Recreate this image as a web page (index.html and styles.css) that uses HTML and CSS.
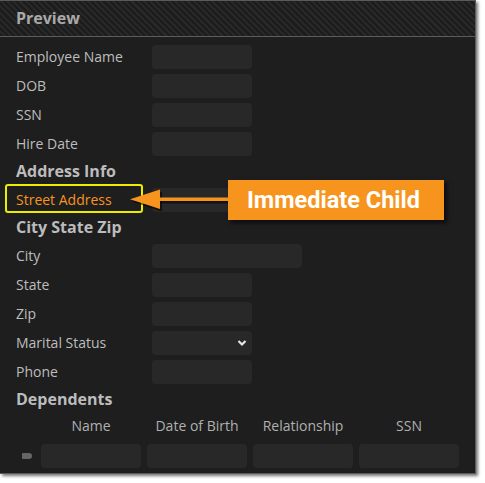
FILE: index.html
```html
<!DOCTYPE html>
<html>
<head>
<meta charset="utf-8">
<link rel="stylesheet" href="styles.css">
</head>
<body>
<div class="panel">
  <div class="header">Preview</div>
  <div class="content">
    <div class="row"><span class="label">Employee Name</span><span class="input"></span></div>
    <div class="row"><span class="label">DOB</span><span class="input"></span></div>
    <div class="row"><span class="label">SSN</span><span class="input"></span></div>
    <div class="row"><span class="label">Hire Date</span><span class="input"></span></div>
    <div class="heading">Address Info</div>
    <div class="row street"><span class="label hl">Street Address</span><span class="input"></span>
      <svg class="arrow" width="110" height="30" viewBox="0 0 110 30">
        <g transform="translate(2,2)" fill="rgba(0,0,0,0.55)">
          <rect x="26" y="11.5" width="80" height="4"/>
          <polygon points="0,13.5 30,3.5 30,23.5"/>
        </g>
        <g fill="#f7941d">
          <rect x="26" y="11.5" width="80" height="3.5"/>
          <polygon points="0,13.2 30,3.5 30,23"/>
        </g>
      </svg>
      <div class="callout">Immediate Child</div>
    </div>
    <div class="heading">City State Zip</div>
    <div class="row"><span class="label">City</span><span class="input wide"></span></div>
    <div class="row"><span class="label">State</span><span class="input"></span></div>
    <div class="row"><span class="label">Zip</span><span class="input"></span></div>
    <div class="row"><span class="label">Marital Status</span><span class="input select"><svg width="10" height="8" viewBox="0 0 10 8"><path d="M1.5 2 L5 5.5 L8.5 2" fill="none" stroke="#e6e6e6" stroke-width="2.2"/></svg></span></div>
    <div class="row"><span class="label">Phone</span><span class="input"></span></div>
    <div class="heading">Dependents</div>
    <div class="cols">
      <span></span><span>Name</span><span>Date of Birth</span><span>Relationship</span><span>SSN</span>
    </div>
    <div class="cols gridrow">
      <span class="indicator"></span><span class="input"></span><span class="input"></span><span class="input"></span><span class="input"></span>
    </div>
  </div>
</div>
</body>
</html>
```
FILE: styles.css
```css
html, body {
  margin: 0;
  padding: 0;
  background: #ffffff;
}
body {
  font-family: "Open Sans", "DejaVu Sans", sans-serif;
  width: 485px;
  height: 483px;
  overflow: hidden;
}
.panel {
  width: 476px;
  height: 474px;
  background: #1e1e1e;
  border: 1px solid #5a5a5a;
  border-left: none;
  box-sizing: border-box;
  box-shadow: 2px 2px 3px rgba(0,0,0,0.55);
  overflow: visible;
}
.header {
  height: 36px;
  box-sizing: border-box;
  border-bottom: 1px solid #5c5c5c;
  background: repeating-linear-gradient(45deg, #1c1c1c 0px, #1c1c1c 2.2px, #282828 2.2px, #282828 4.4px);
  color: #a9a9a9;
  font-weight: 700;
  font-size: 16px;
  padding-left: 16px;
  line-height: 35px;
}
.content {
  padding-top: 5px;
}
.row {
  display: grid;
  grid-template-columns: 136px auto;
  align-items: center;
  height: 29px;
  padding-left: 16px;
  position: relative;
}
.label {
  color: #bdbdbd;
  font-size: 14px;
}
.input {
  display: block;
  width: 100px;
  height: 24px;
  background: #282828;
  border-radius: 4px;
  box-sizing: border-box;
}
.input.wide {
  width: 150px;
}
.select {
  display: flex;
  justify-content: flex-end;
  align-items: center;
  padding-right: 5px;
}
.heading {
  height: 27px;
  line-height: 27px;
  padding-left: 16px;
  color: #bcbcbc;
  font-weight: 700;
  font-size: 16px;
}
.hl {
  color: #f7941d;
  position: relative;
}
.hl::before {
  content: "";
  position: absolute;
  left: -11px;
  top: -6px;
  width: 138px;
  height: 29px;
  border: 2px solid #eded00;
  border-radius: 3px;
  box-sizing: border-box;
}
.arrow {
  position: absolute;
  left: 130px;
  top: 1px;
}
.callout {
  position: absolute;
  left: 228px;
  top: -5px;
  width: 216px;
  height: 40px;
  background: #f7941d;
  color: #ffffff;
  font-family: Roboto, "Liberation Sans", sans-serif;
  font-weight: 700;
  font-size: 23.5px;
  line-height: 40px;
  padding-left: 19px;
  box-sizing: border-box;
  box-shadow: 3px 3px 4px rgba(0,0,0,0.6);
}
.cols {
  display: grid;
  grid-template-columns: 35px 100px 100px 100px 100px;
  column-gap: 6px;
  height: 24px;
  align-items: center;
  color: #b0b0b0;
  font-size: 14px;
  text-align: center;
}
.gridrow {
  margin-top: 7px;
}
.indicator {
  justify-self: start;
  margin-left: 22px;
  width: 10px;
  height: 6px;
  background: #666;
  border-radius: 1px 3px 3px 1px;
}
```
